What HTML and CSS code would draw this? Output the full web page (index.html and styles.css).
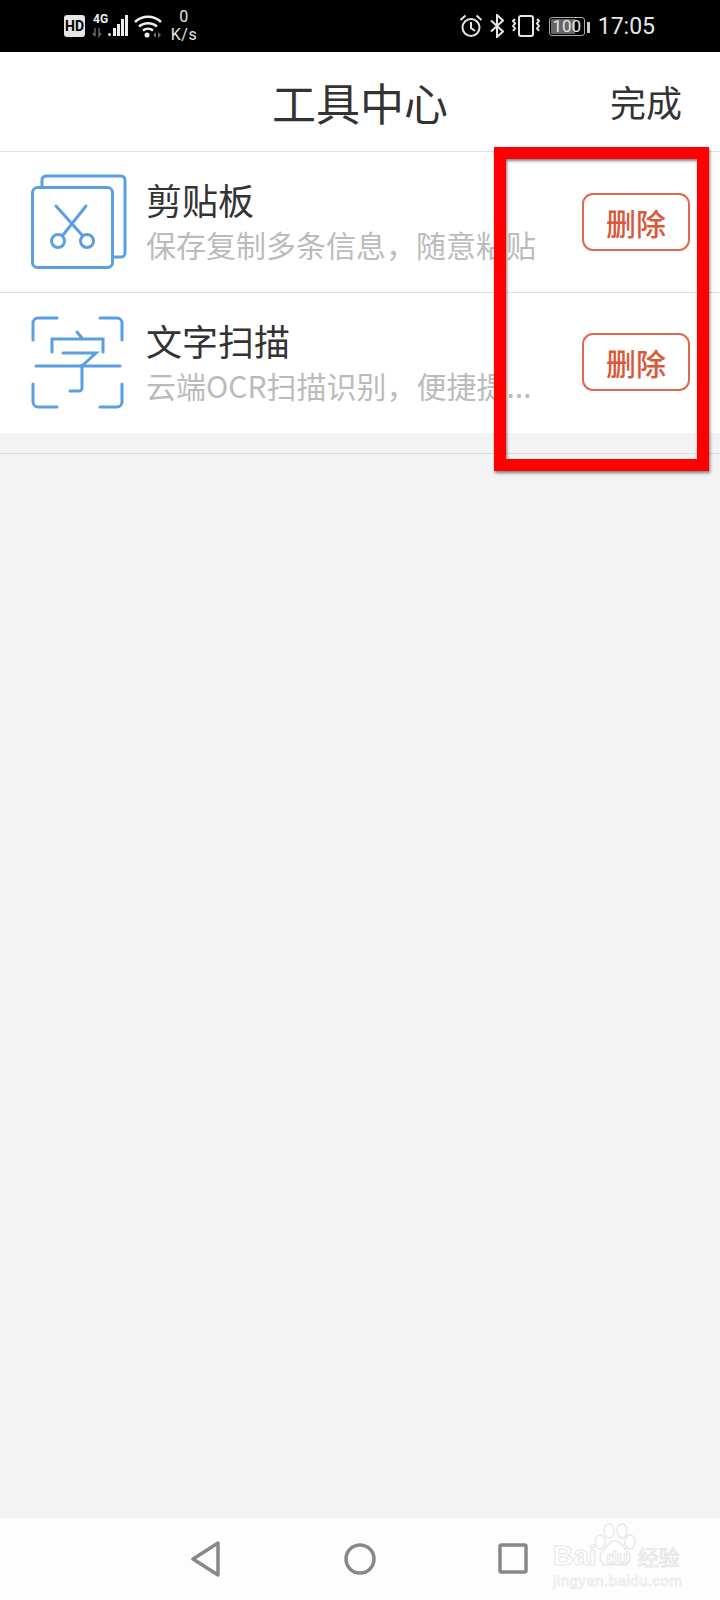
FILE: index.html
```html
<!DOCTYPE html>
<html lang="zh-CN">
<head>
    <meta charset="UTF-8">
    <meta name="viewport" content="width=device-width, initial-scale=1.0">
    <title>工具中心</title>
    <link rel="stylesheet" href="styles.css">
</head>
<body>
    <div class="screen">
        <div class="status-bar">
            <div class="status-group">
                <span class="hd">HD</span>
                <svg class="signal" width="36" height="26" viewBox="0 0 36 26">
                    <text x="1" y="10" class="signal-label">4G</text>
                    <path d="M3 15v8M1 20l2 3M7 15v8l2-3" class="signal-arrows"/>
                    <rect x="16" y="20" width="3" height="3" rx="1.5" fill="#eee"/>
                    <rect x="21" y="15" width="3" height="8" fill="#eee"/>
                    <rect x="25" y="11" width="3" height="12" fill="#eee"/>
                    <rect x="29" y="6" width="3" height="17" fill="#eee"/>
                    <rect x="33" y="2" width="3" height="21" fill="#eee"/>
                </svg>
                <svg class="wifi" width="28" height="24" viewBox="0 0 28 24">
                    <path d="M1 8c7-7 19-7 26 0M5 12.500c5-4.500 13-4.500 18 0M9 16.500c3-2.500 7-2.500 10 0" class="wifi-arcs"/>
                    <circle cx="13" cy="21" r="2.500" fill="#eee"/>
                    <path d="M19 21l3-3v6zM24 18l3 3-3 3z" fill="#666"/>
                </svg>
                <div class="speed"><span>0</span><span>K/s</span></div>
            </div>
            <div class="status-group">
                <svg class="alarm" width="24" height="24" viewBox="0 0 24 24">
                    <circle cx="12" cy="13.500" r="8.500"/>
                    <path d="M12 8v6l4 3M1.500 6l5-4.500M22.500 6l-5-4.500"/>
                </svg>
                <svg class="bluetooth" width="14" height="24" viewBox="0 0 14 24">
                    <path d="M1 6.500l12 11-6 5.500V1l6 5.500-12 11"/>
                </svg>
                <svg class="vibrate" width="28" height="22" viewBox="0 0 28 22">
                    <rect x="7" y="1" width="14" height="20" rx="2"/>
                    <path d="M3 4l-2 2 2 2.500-2 2.500 2 2.500-2 2.500M25 4l2 2-2 2.500 2 2.500-2 2.500 2 2.500"/>
                </svg>
                <div class="battery"><span>100</span></div>
                <span class="time">17:05</span>
            </div>
        </div>

        <header class="top-bar">
            <h1>工具中心</h1>
            <a class="done">完成</a>
        </header>

        <ul class="tool-list">
            <li class="tool">
                <svg class="tool-icon" width="100" height="100" viewBox="0 0 100 100">
                    <path d="M14 14V8a4 4 0 0 1 4-4h75a4 4 0 0 1 4 4v73a4 4 0 0 1-4 4h-8"/>
                    <rect x="4.500" y="15.500" width="80" height="80" rx="5"/>
                    <path d="M28 34l26 29M58 34L35 63"/>
                    <circle cx="30" cy="69" r="6.500"/>
                    <circle cx="59" cy="69" r="6.500"/>
                </svg>
                <div class="tool-text">
                    <div class="tool-name">剪贴板</div>
                    <div class="tool-desc">保存复制多条信息，随意粘贴</div>
                </div>
                <button class="btn-delete">删除</button>
            </li>
            <li class="tool">
                <svg class="tool-icon" width="100" height="100" viewBox="0 0 100 100">
                    <path d="M5 28V11a5 5 0 0 1 5-5h19M72 6h17a5 5 0 0 1 5 5v17M5 72v18a5 5 0 0 0 5 5h19M72 95h17a5 5 0 0 0 5-5V72"/>
                    <path d="M49 20l5 6M24 40V27h51v13M35 41h33L55 53M8 54h84M54 53v23a3 3 0 0 1-3 3h-9"/>
                </svg>
                <div class="tool-text">
                    <div class="tool-name">文字扫描</div>
                    <div class="tool-desc">云端OCR扫描识别，便捷提...</div>
                </div>
                <button class="btn-delete">删除</button>
            </li>
        </ul>
        <div class="list-gap"></div>

        <div class="spacer"></div>

        <nav class="nav-bar">
            <svg width="32" height="36" viewBox="0 0 32 36">
                <path d="M3 18L28 2v32z"/>
            </svg>
            <svg width="32" height="36" viewBox="0 0 32 36">
                <circle cx="16" cy="18" r="14"/>
            </svg>
            <svg width="32" height="36" viewBox="0 0 32 36">
                <rect x="2" y="4" width="26" height="27" rx="1.500"/>
            </svg>
        </nav>

        <div class="highlight"></div>

        <div class="watermark">
            <svg class="paw" width="42" height="44" viewBox="0 0 42 44">
                <ellipse cx="15" cy="8" rx="5" ry="7"/>
                <ellipse cx="28" cy="8" rx="5" ry="7"/>
                <ellipse cx="6" cy="19" rx="5" ry="7"/>
                <ellipse cx="36" cy="19" rx="5" ry="7"/>
                <path d="M21 18c6 0 8 6 12 10 6 6 2 15-5 14-4-.5-10-.5-14 0-7 1-11-8-5-14 4-4 6-10 12-10z"/>
            </svg>
            <div class="wm-brand"><span>Bai</span><span class="wm-du">du</span><span class="wm-cn">经验</span></div>
            <div class="wm-site">jingyan.baidu.com</div>
        </div>
    </div>
</body>
</html>
```

FILE: styles.css
```css
html, body {
    margin: 0;
    padding: 0;
    background-color: #f3f3f3;
    font-family: "Noto Sans CJK SC", "Noto Sans", sans-serif;
}
.screen {
    position: relative;
    width: 720px;
    height: 1600px;
    display: flex;
    flex-direction: column;
    overflow: hidden;
}

/* status bar */
.status-bar {
    height: 52px;
    padding: 0 65px 0 64px;
    background: #000;
    color: #e6e6e6;
    display: flex;
    justify-content: space-between;
    align-items: center;
    font-family: Roboto, sans-serif;
}
.status-group {
    display: flex;
    align-items: center;
}
.hd {
    width: 21px;
    height: 22px;
    background: #e6e6e6;
    color: #000;
    border-radius: 3px;
    font-size: 14px;
    font-weight: 700;
    line-height: 22px;
    text-align: center;
}
.signal {
    margin-left: 7px;
}
.signal-label {
    fill: #eee;
    font-family: Roboto, sans-serif;
    font-size: 12px;
    font-weight: 700;
}
.signal-arrows {
    fill: none;
    stroke: #666;
    stroke-width: 1.500;
}
.wifi {
    margin-left: 6px;
}
.wifi-arcs {
    fill: none;
    stroke: #eee;
    stroke-width: 2.500;
}
.speed {
    width: 32px;
    margin-left: 6px;
    display: flex;
    flex-direction: column;
    align-items: center;
    font-size: 16px;
    line-height: 18px;
    letter-spacing: .5px;
}
.alarm, .bluetooth, .vibrate {
    fill: none;
    stroke: #e6e6e6;
    stroke-width: 2;
}
.bluetooth {
    margin-left: 7px;
}
.vibrate {
    margin-left: 8px;
}
.battery {
    position: relative;
    width: 32px;
    height: 15px;
    margin: 0 13px 0 9px;
    border: 1px solid #aaa;
    border-radius: 3px;
    background: linear-gradient(90deg, #666 75%, #000 75%);
    background-clip: content-box;
    padding: 1px;
    color: #e6e6e6;
    font-size: 17px;
    line-height: 15px;
    text-align: center;
}
.battery::after {
    content: "";
    position: absolute;
    top: 4px;
    right: -6px;
    width: 3px;
    height: 11px;
    background: #ccc;
}
.time {
    font-size: 23px;
}

/* header */
.top-bar {
    position: relative;
    height: 99px;
    background: #fff;
    border-bottom: 1px solid #e2e2e2;
    display: flex;
    align-items: center;
    justify-content: center;
}
.top-bar h1 {
    margin: 0;
    color: #333;
    font-size: 44px;
    font-weight: 400;
}
.done {
    position: absolute;
    right: 38px;
    top: 24px;
    color: #333;
    font-size: 36px;
    line-height: 50px;
}

/* tools */
.tool-list {
    margin: 0;
    padding: 0;
    list-style: none;
    background: #fff;
}
.tool {
    height: 140px;
    padding: 0 30px 0 28px;
    display: flex;
    align-items: center;
    border-bottom: 1px solid #dedede;
}
.tool:last-child {
    height: 138px;
    padding-bottom: 2px;
    border-bottom: none;
}
.tool:last-child .tool-text {
    padding-bottom: 2px;
}
.tool-icon {
    flex: none;
    fill: none;
    stroke: #5b9ee1;
    stroke-width: 3;
    stroke-linecap: round;
}
.tool-text {
    width: 400px;
    margin-left: 18px;
    padding-bottom: 4px;
}
.tool-name {
    color: #333;
    font-size: 36px;
    line-height: 46px;
}
.tool-desc {
    margin-top: 2px;
    color: #bbb;
    font-size: 30px;
    line-height: 40px;
    white-space: nowrap;
}
.btn-delete {
    width: 108px;
    height: 58px;
    margin-left: auto;
    padding: 0;
    background: #fff;
    border: 2.500px solid #dd6a4e;
    border-radius: 11px;
    color: #d9583a;
    font-family: inherit;
    font-size: 30px;
    font-weight: 500;
}
.list-gap {
    height: 20px;
    border-bottom: 1px solid #dcdcdc;
}
.spacer {
    flex: 1;
}

/* nav */
.nav-bar {
    height: 82px;
    background: #fdfdfd;
    display: flex;
    justify-content: center;
    align-items: center;
    gap: 122px;
}
.nav-bar svg {
    fill: none;
    stroke: #888;
    stroke-width: 3.500;
    stroke-linejoin: round;
}

/* red box drawn over the screenshot */
.highlight {
    position: absolute;
    left: 494px;
    top: 147px;
    width: 191px;
    height: 300px;
    border: 12px solid #f00;
    box-shadow: 1px 2px 3px rgba(0, 0, 0, .5), inset 1px 2px 3px rgba(0, 0, 0, .5);
}

/* baidu watermark */
.watermark {
    position: absolute;
    left: 553px;
    top: 1523px;
    width: 130px;
    height: 66px;
    color: #fff;
    font-family: "Liberation Sans", sans-serif;
}
.paw {
    position: absolute;
    left: 41px;
    top: 0;
    fill: #fff;
    stroke: #e8e8e8;
    stroke-width: 1.500;
}
.wm-brand {
    position: absolute;
    left: 0;
    top: 14px;
    width: 130px;
    display: flex;
    align-items: center;
    font-size: 28px;
    font-weight: 700;
    line-height: 34px;
    -webkit-text-stroke: 1px #e6e6e6;
}
.wm-du {
    width: 41px;
    margin-top: 4px;
    font-size: 18px;
    text-align: center;
}
.wm-cn {
    font-family: "Noto Sans CJK SC", sans-serif;
    font-size: 21px;
    font-weight: 400;
}
.wm-site {
    position: absolute;
    left: 0;
    top: 49px;
    font-size: 15px;
    line-height: 18px;
    letter-spacing: .5px;
    white-space: nowrap;
    -webkit-text-stroke: .7px #e8e8e8;
}
```
